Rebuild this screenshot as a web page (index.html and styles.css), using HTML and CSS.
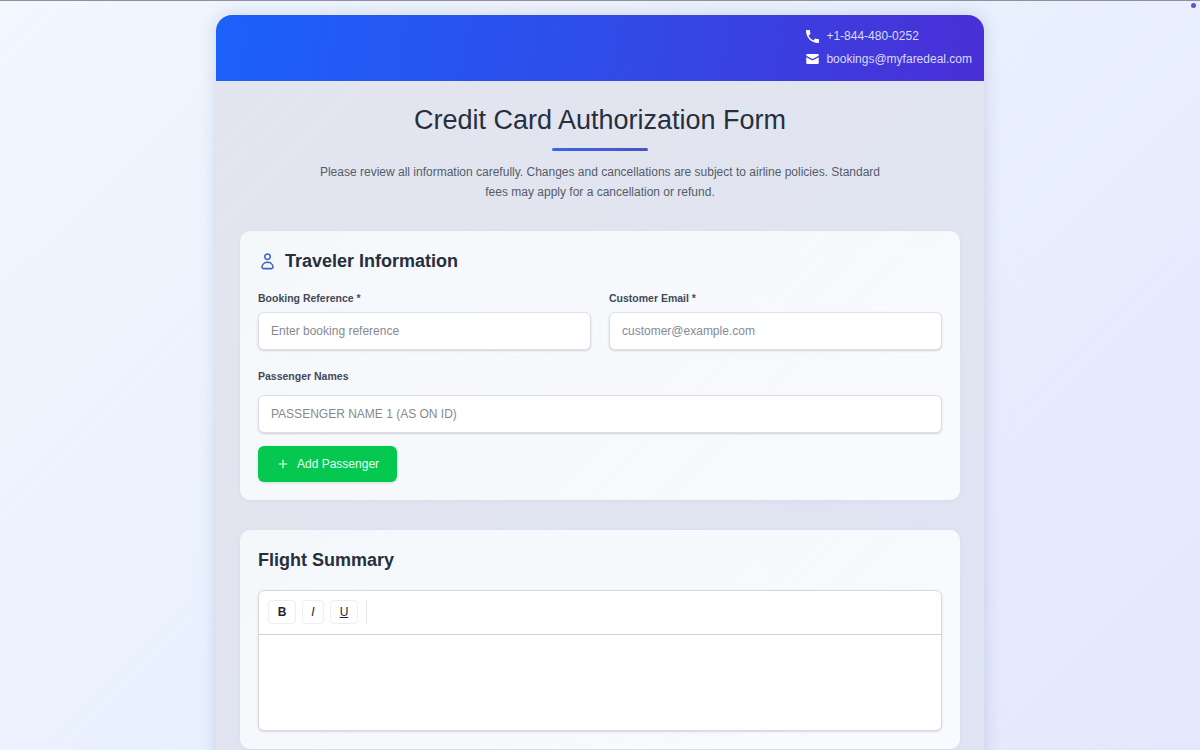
FILE: index.html
```html
<!DOCTYPE html>
<html lang="en">
<head>
<meta charset="utf-8">
<title>Credit Card Authorization Form</title>
<link rel="stylesheet" href="styles.css">
</head>
<body>
<span class="dot"></span>
<div class="page">
  <header class="topbar">
    <div class="contact">
      <div class="contact-row">
        <svg class="phone-icon" viewBox="3 3 18 18"><path d="M6.6 10.8c1.4 2.800 3.800 5.100 6.600 6.600l2.200-2.200c.3-.3.700-.4 1-.2 1.100.4 2.300.6 3.600.6.600 0 1 .4 1 1V20c0 .6-.4 1-1 1C10.600 21 3 13.400 3 4c0-.6.400-1 1-1h3.500c.6 0 1 .4 1 1 0 1.300.2 2.500.6 3.600.1.300 0 .7-.2 1z"/></svg>
        <span>+1-844-480-0252</span>
      </div>
      <div class="contact-row">
        <svg class="mail-icon" viewBox="2 4 20 16"><path d="M20 4H4C2.900 4 2 4.900 2 6v.6l10 5.400 10-5.400V6c0-1.100-.9-2-2-2zM2 9v9c0 1.100.9 2 2 2h16c1.100 0 2-.9 2-2V9l-10 5.400z"/></svg>
        <span>bookings@myfaredeal.com</span>
      </div>
    </div>
  </header>
  <main class="content">
    <div class="intro">
      <h1 class="title">Credit Card Authorization Form</h1>
      <div class="title-rule"></div>
      <p class="lead">Please review all information carefully. Changes and cancellations are subject to airline policies. Standard fees may apply for a cancellation or refund.</p>
    </div>
    <section class="card">
      <h2 class="card-title">
        <svg class="person-icon" viewBox="0 0 24 24"><circle cx="12" cy="6" r="3.500"/><path d="M7 21h10a2 2 0 0 0 2-2.300C18.500 15.500 15.500 13 12 13s-6.500 2.500-7 5.700A2 2 0 0 0 7 21z"/></svg>
        <span>Traveler Information</span>
      </h2>
      <div class="two-col">
        <div class="field">
          <label class="label">Booking Reference *</label>
          <input class="input" type="text" placeholder="Enter booking reference">
        </div>
        <div class="field">
          <label class="label">Customer Email *</label>
          <input class="input" type="text" placeholder="customer@example.com">
        </div>
      </div>
      <div class="field names">
        <label class="label">Passenger Names</label>
        <input class="input" type="text" placeholder="PASSENGER NAME 1 (AS ON ID)">
      </div>
      <button class="add-btn" type="button">
        <svg class="plus-icon" viewBox="0 0 12 12"><path d="M6 1v10M1 6h10"/></svg>
        <span>Add Passenger</span>
      </button>
    </section>
    <section class="card">
      <h2 class="card-title">Flight Summary</h2>
      <div class="editor">
        <div class="toolbar">
          <button class="tool tool-b" type="button">B</button>
          <button class="tool tool-i" type="button">I</button>
          <button class="tool tool-u" type="button">U</button>
          <span class="tool-sep"></span>
        </div>
        <div class="editor-body"></div>
      </div>
    </section>
  </main>
</div>
</body>
</html>
```
FILE: styles.css
```css
* { box-sizing: border-box; }
html, body { margin: 0; height: 750px; overflow: hidden; }
body {
  font-family: "Liberation Sans", Arial, sans-serif;
  background: linear-gradient(135deg, #f2f7fe 0%, #eaf1fe 45%, #e3e8fc 100%);
  border-top: 1px solid #8f929c;
  padding-top: 14px;
  color: #1f2937;
}
.dot {
  position: absolute;
  top: 3px;
  left: 1191px;
  width: 5px;
  height: 5px;
  border-radius: 50%;
  background: #5b55c9;
}
.page {
  width: 768px;
  margin: 0 auto;
  border-radius: 16px 16px 0 0;
  background: linear-gradient(135deg, #e3e5ee 0%, #dfe4f3 100%);
  box-shadow: 0 0 18px rgba(70, 80, 130, 0.2);
}
.topbar {
  height: 66px;
  border-radius: 16px 16px 0 0;
  background: linear-gradient(100deg, #1c61fb 0%, #2f4ce9 50%, #4a2fd6 100%);
  display: flex;
  justify-content: flex-end;
  padding: 14px 12px 0 0;
}
.contact { display: flex; flex-direction: column; gap: 10px; }
.contact-row {
  display: flex;
  align-items: center;
  height: 14px;
  font-size: 12px;
  line-height: 14px;
  color: #d8dcf8;
}
.contact-row + .contact-row { margin-top: -1px; }
.contact-row span { margin-left: 7.500px; }
.phone-icon { width: 13px; height: 13px; fill: #fff; flex: none; }
.mail-icon { width: 13px; height: 10px; fill: #fff; flex: none; }
.content { padding: 0 24px 24px; }
.intro { display: flex; flex-direction: column; align-items: center; padding-top: 22px; }
.title {
  margin: 0;
  font-size: 27px;
  font-weight: 400;
  line-height: 34px;
  color: #262f3c;
}
.title-rule {
  width: 96px;
  height: 3px;
  margin-top: 11px;
  border-radius: 2px;
  background: linear-gradient(90deg, #3b63e6, #4a55c4);
}
.lead {
  width: 570px;
  margin: 11px 0 0;
  font-size: 12px;
  line-height: 20px;
  text-align: center;
  color: #545c6a;
}
.card {
  margin-top: 30px;
  padding: 18px;
  border-radius: 10px;
  background: linear-gradient(135deg, #f5f8fb 0%, #f9fafe 100%);
  box-shadow: 0 1px 4px rgba(120, 130, 160, 0.08);
}
.intro + .card { margin-top: 29px; }
.card-title {
  margin: 0 0 19px;
  display: flex;
  align-items: center;
  gap: 8px;
  font-size: 18px;
  line-height: 24px;
  font-weight: 700;
  color: #262f3c;
}
.card:last-child .card-title { margin-bottom: 18px; }
.person-icon {
  width: 19px;
  height: 19px;
  fill: none;
  stroke: #3b5fc9;
  stroke-width: 1.900;
}
.two-col { display: grid; grid-template-columns: 1fr 1fr; gap: 18px; }
.field { display: flex; flex-direction: column; }
.names { margin-top: 20px; }
.label {
  font-size: 10.500px;
  line-height: 13px;
  font-weight: 700;
  color: #414a58;
  margin-bottom: 7px;
}
.names .label { margin-bottom: 12px; }
.input {
  width: 100%;
  height: 38px;
  padding: 0 12px;
  font: 12px "Liberation Sans", Arial, sans-serif;
  color: #374151;
  background: #fff;
  border: 1px solid #dcdfe6;
  border-radius: 6px;
  box-shadow: 0 1px 2px rgba(70, 75, 90, 0.22);
  outline: none;
}
.input::placeholder { color: #858a92; opacity: 1; }
.add-btn {
  margin-top: 13px;
  display: flex;
  align-items: center;
  gap: 9px;
  width: 139px;
  height: 36px;
  padding: 0 0 0 20px;
  border: 0;
  border-radius: 6px;
  background: #05c850;
  box-shadow: 0 1px 3px rgba(5, 150, 70, 0.2);
  color: #eafff1;
  font: 12px "Liberation Sans", Arial, sans-serif;
}
.plus-icon { width: 10px; height: 10px; fill: none; stroke: #fff; stroke-width: 1.300; }
.editor {
  border: 1px solid #d6d8dd;
  border-radius: 6px;
  background: #fff;
  box-shadow: 0 1px 2px rgba(70, 75, 90, 0.18);
}
.toolbar {
  height: 44px;
  display: flex;
  align-items: center;
  padding: 0 9px 1px;
  gap: 6px;
  border-bottom: 1px solid #cfd2d8;
}
.tool {
  height: 24px;
  padding: 0;
  border: 1px solid #eceef1;
  border-radius: 4px;
  background: #fff;
  color: #1f2430;
  font: 12px "Liberation Sans", Arial, sans-serif;
}
.tool-b { width: 28px; font-weight: 700; }
.tool-i { width: 22px; font-style: italic; }
.tool-u { width: 28px; text-decoration: underline; }
.tool-sep { width: 1px; height: 24px; margin-left: 2px; background: #e5e7eb; }
.editor-body { height: 95px; }
```
